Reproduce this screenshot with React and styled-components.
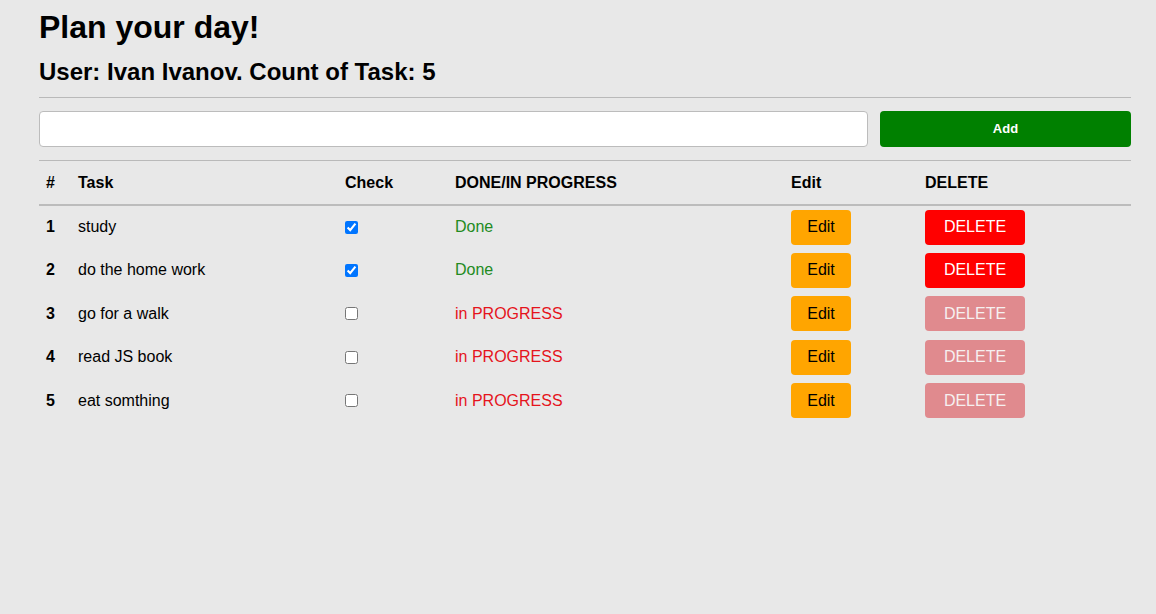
import React, { useState } from 'react'
import styled, { createGlobalStyle } from 'styled-components'

const GlobalStyle = createGlobalStyle`
  html, body {
    margin: 0;
    padding: 0;
    background: #e8e8e8;
    font-family: 'Liberation Sans', Arial, sans-serif;
    color: #000;
  }
`

const Page = styled.div`
  width: 1092px;
  padding: 9px 0 0 39px;
  min-height: 605px;
`

const Title = styled.h1`
  margin: 0;
  font-size: 32px;
  line-height: 37px;
  font-weight: 700;
`

const SubTitle = styled.h2`
  margin: 12px 0 0;
  font-size: 24px;
  line-height: 28px;
  font-weight: 700;
`

const Rule = styled.hr`
  margin: ${(p) => p.$top}px 0 0;
  border: none;
  border-top: 1px solid #b9b9b9;
  height: 0;
`

const AddRow = styled.div`
  display: flex;
  gap: 12px;
  margin-top: 13px;
`

const TaskInput = styled.input`
  flex: 1;
  height: 36px;
  box-sizing: border-box;
  border: 1px solid #bcbcbc;
  border-radius: 4px;
  background: #fff;
  font-family: inherit;
  font-size: 16px;
  padding: 0 10px;
`

const AddButton = styled.button`
  width: 251px;
  height: 36px;
  padding: 0 0 2px;
  border: none;
  border-radius: 4px;
  background: #008000;
  color: #fff;
  font-family: inherit;
  font-size: 13px;
  font-weight: 700;
`

const Table = styled.table`
  width: 100%;
  border-collapse: collapse;
  table-layout: fixed;
`

const Th = styled.th`
  box-sizing: border-box;
  width: ${(p) => (p.$w ? `${p.$w}px` : 'auto')};
  height: 44px;
  padding: 0 8px 0 ${(p) => p.$pl ?? 8}px;
  text-align: left;
  font-size: 16px;
  font-weight: 700;
  border-bottom: 2px solid #bcbcbc;
`

const Tr = styled.tr`
  height: 43.5px;
`

const Td = styled.td`
  padding: 0 8px 0 ${(p) => p.$pl ?? 8}px;
  font-size: 16px;
  font-weight: ${(p) => (p.$bold ? 700 : 400)};
  vertical-align: middle;
`

const Status = styled.span`
  color: ${(p) => (p.$done ? '#228b22' : '#e5141c')};
`

const Check = styled.input`
  margin: 0;
  width: 13px;
  height: 13px;
  display: block;
`

const EditButton = styled.button`
  width: 60px;
  height: 35px;
  border: none;
  border-radius: 4px;
  background: #ffa500;
  color: #000;
  font-family: inherit;
  font-size: 16px;
`

const DeleteButton = styled.button`
  width: 100px;
  height: 35px;
  border: none;
  border-radius: 4px;
  background: #ff0000;
  color: #fff;
  font-family: inherit;
  font-size: 16px;
  &:disabled {
    background: #e08a8e;
    color: #f6f0f0;
  }
`

const initialTasks = [
  { id: 1, title: 'study', done: true },
  { id: 2, title: 'do the home work', done: true },
  { id: 3, title: 'go for a walk', done: false },
  { id: 4, title: 'read JS book', done: false },
  { id: 5, title: 'eat somthing', done: false },
]

export default function App() {
  const [tasks, setTasks] = useState(initialTasks)

  const toggle = (id) =>
    setTasks(tasks.map((t) => (t.id === id ? { ...t, done: !t.done } : t)))

  return (
    <>
      <GlobalStyle />
      <Page>
        <Title>Plan your day!</Title>
        <SubTitle>User: Ivan Ivanov. Count of Task: {tasks.length}</SubTitle>
        <Rule $top={11} />
        <AddRow>
          <TaskInput type='text' />
          <AddButton>Add</AddButton>
        </AddRow>
        <Rule $top={13} />
        <Table>
          <thead>
            <tr>
              <Th $w={31} $pl={7}>#</Th>
              <Th $w={267}>Task</Th>
              <Th $w={110}>Check</Th>
              <Th $w={336}>DONE/IN PROGRESS</Th>
              <Th $w={134}>Edit</Th>
              <Th>DELETE</Th>
            </tr>
          </thead>
          <tbody>
            {tasks.map((task, i) => (
              <Tr key={task.id}>
                <Td $bold $pl={7}>{i + 1}</Td>
                <Td>{task.title}</Td>
                <Td>
                  <Check
                    type='checkbox'
                    checked={task.done}
                    onChange={() => toggle(task.id)}
                  />
                </Td>
                <Td>
                  <Status $done={task.done}>
                    {task.done ? 'Done' : 'in PROGRESS'}
                  </Status>
                </Td>
                <Td>
                  <EditButton>Edit</EditButton>
                </Td>
                <Td>
                  <DeleteButton disabled={!task.done}>DELETE</DeleteButton>
                </Td>
              </Tr>
            ))}
          </tbody>
        </Table>
      </Page>
    </>
  )
}
